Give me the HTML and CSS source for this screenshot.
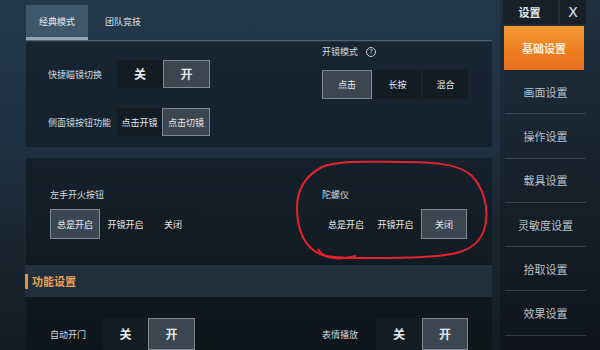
FILE: index.html
```html
<!DOCTYPE html>
<html lang="zh">
<head>
<meta charset="utf-8">
<title>设置</title>
<link rel="stylesheet" href="styles.css">
</head>
<body>
<div class="app">
  <div class="main">
    <div class="tabs">
      <div class="tab tab-on">经典模式</div>
      <div class="tab tab-off">团队竞技</div>
    </div>

    <div class="panel panel1">
      <div class="col-left">
        <div class="row row1">
          <div class="label">快捷瞄镜切换</div>
          <div class="seg">
            <div class="btn big w46">关</div>
            <div class="btn big w47 on">开</div>
          </div>
        </div>
        <div class="row row2">
          <div class="label">侧面镜按钮功能</div>
          <div class="seg">
            <div class="btn w45">点击开镜</div>
            <div class="btn w48 on">点击切镜</div>
          </div>
        </div>
      </div>
      <div class="col-right">
        <div class="label-top">开镜模式 <span class="help">?</span></div>
        <div class="seg gap2">
          <div class="btn w50 h29 on">点击</div>
          <div class="btn w47 h29">长按</div>
          <div class="btn w45 h29">混合</div>
        </div>
      </div>
    </div>

    <div class="panel panel2">
      <div class="col-left pad2">
        <div class="label-top">左手开火按钮</div>
        <div class="seg gap1">
          <div class="btn w50 h30 on">总是开启</div>
          <div class="btn w49 h30">开镜开启</div>
          <div class="btn w44 h30">关闭</div>
        </div>
      </div>
      <div class="col-right pad2">
        <div class="label-top">陀螺仪</div>
        <div class="seg gap1">
          <div class="btn w48 h30">总是开启</div>
          <div class="btn w49 h30">开镜开启</div>
          <div class="btn w46 h30 on">关闭</div>
        </div>
      </div>
    </div>

    <div class="section-head"><span class="bar"></span>功能设置</div>

    <div class="panel panel3">
      <div class="col-left pad3">
        <div class="row">
          <div class="label short">自动开门</div>
          <div class="seg">
            <div class="btn big w45 h32">关</div>
            <div class="btn big w47 h32 on">开</div>
          </div>
        </div>
      </div>
      <div class="col-right pad3">
        <div class="row">
          <div class="label short2">表情播放</div>
          <div class="seg">
            <div class="btn big w46 h32">关</div>
            <div class="btn big w46 h32 on">开</div>
          </div>
        </div>
      </div>
    </div>
  </div>

  <div class="side">
    <div class="side-head">
      <div class="title">设置</div>
      <div class="close">X</div>
    </div>
    <div class="nav nav-on">基础设置</div>
    <div class="nav">画面设置</div>
    <div class="nav">操作设置</div>
    <div class="nav">载具设置</div>
    <div class="nav">灵敏度设置</div>
    <div class="nav">拾取设置</div>
    <div class="nav">效果设置</div>
  </div>
</div>

<svg class="mark" width="600" height="350" viewBox="0 0 600 350">
  <path d="M322,167 C338,160 365,162 405,162 C440,162 460,165 472,176 C483,188 488,205 486,221 C484,237 476,247 460,252 C440,258 400,258 360,258 C345,258 328,258 320,254 C305,248 297,230 297,208 C297,190 305,176 322,167 Z" fill="none" stroke="#e3222c" stroke-width="2"/>
  <path d="M318,249 C322,258 338,261 356,256" fill="none" stroke="#e3222c" stroke-width="2"/>
</svg>
</body>
</html>
```

FILE: styles.css
```css
* { box-sizing: border-box; }

html, body {
  margin: 0;
  padding: 0;
}

body {
  width: 600px;
  height: 350px;
  overflow: hidden;
  position: relative;
  font-family: "Noto Sans CJK SC", "Noto Sans", sans-serif;
  color: #d6dce1;
  background: linear-gradient(180deg, #23394b 0%, #1e3142 40%, #18242f 75%, #141b22 100%);
}

.app {
  display: flex;
  height: 350px;
}

.main {
  flex: 0 0 500px;
  padding-left: 26px;
  padding-right: 8px;
}

.tabs {
  height: 41px;
  display: flex;
  align-items: flex-start;
  border-bottom: 1px solid rgba(130, 150, 165, 0.45);
}

.tab {
  font-size: 9px;
  line-height: 1;
  display: flex;
  align-items: center;
  justify-content: center;
}

.tab-on {
  margin-top: 5px;
  width: 62px;
  height: 35px;
  background: rgba(110, 140, 160, 0.38);
  border-bottom: 3px solid #93a7b4;
  color: #e6ebee;
}

.tab-off {
  margin-top: 5px;
  height: 32px;
  margin-left: 17px;
  color: #dfe5ea;
}

.panel {
  display: grid;
  grid-template-columns: 274px 192px;
  background: rgba(8, 14, 20, 0.42);
}

.panel1 {
  margin-top: 1px;
  height: 105px;
}

.panel2 {
  margin-top: 11px;
  height: 107px;
}

.panel3 {
  height: 60px;
}

.col-left {
  padding-left: 22px;
  padding-top: 18px;
  display: flex;
  flex-direction: column;
  gap: 20px;
}

.col-right {
  padding-left: 22px;
  padding-top: 3px;
  display: flex;
  flex-direction: column;
}

.row {
  display: flex;
  align-items: center;
}

.row2 {
  margin-top: 0;
}

.label {
  width: 69px;
  font-size: 9px;
  line-height: 1;
  color: #d2d9de;
  white-space: nowrap;
}

.label.short {
  width: 55px;
  padding-left: 2px;
}

.label.short2 {
  width: 54px;
}

.label-top {
  font-size: 9px;
  line-height: 14px;
  height: 14px;
  color: #d2d9de;
  display: flex;
  align-items: center;
  gap: 8px;
  margin-bottom: 11px;
}

.help {
  width: 10px;
  height: 10px;
  border: 1px solid #c9d1d7;
  border-radius: 50%;
  font-size: 7px;
  line-height: 8px;
  text-align: center;
  font-family: "DejaVu Sans", sans-serif;
}

.pad2 {
  padding-top: 30px;
  gap: 0;
}

.pad2 .label-top {
  margin-bottom: 7px;
}

.col-left.pad2 {
  padding-left: 24px;
}

.pad3 {
  padding-top: 21px;
}

.seg {
  display: flex;
}

.gap1 { gap: 1px; }
.gap2 { gap: 2px; }

.btn {
  height: 28px;
  background: #141c23;
  color: #e4e9ec;
  font-size: 9px;
  line-height: 1;
  display: flex;
  align-items: center;
  justify-content: center;
  white-space: nowrap;
}

.btn.big {
  font-size: 12px;
  font-weight: 700;
}

.btn.on {
  background: #3a4651;
  border: 1px solid #7c8994;
}

.w44 { width: 44px; }
.w45 { width: 45px; }
.w46 { width: 46px; }
.w47 { width: 47px; }
.w48 { width: 48px; }
.w49 { width: 49px; }
.w50 { width: 50px; }
.h29 { height: 29px; }
.h30 { height: 30px; }
.h32 { height: 32px; }

.section-head {
  height: 32px;
  display: flex;
  align-items: center;
  gap: 4px;
  margin-left: -1px;
  font-size: 11px;
  font-weight: 700;
  color: #e9a458;
  background: rgba(70, 95, 115, 0.22);
}

.bar {
  width: 3px;
  height: 15px;
  background: #e9913a;
}

.side {
  flex: 1;
  padding-left: 3px;
  padding-right: 12px;
  background: linear-gradient(180deg, rgba(20, 28, 36, 0.35), rgba(12, 16, 20, 0.55));
  display: flex;
  flex-direction: column;
}

.side-head {
  height: 26px;
  display: flex;
  gap: 2px;
  padding-bottom: 2px;
}

.title {
  width: 55px;
  background: #18212a;
  font-size: 11px;
  font-weight: 700;
  color: #e2e7eb;
  display: flex;
  align-items: center;
  justify-content: center;
  padding-right: 2px;
}

.close {
  width: 26px;
  background: #18212a;
  font-family: "DejaVu Sans", sans-serif;
  font-size: 14px;
  color: #e2e7eb;
  display: flex;
  align-items: center;
  justify-content: center;
}

.nav {
  height: 44.3px;
  flex: 0 0 auto;
  margin: 0 2px;
  font-size: 11px;
  color: #b9c1c8;
  display: flex;
  align-items: center;
  justify-content: center;
  border-bottom: 1px solid rgba(120, 135, 148, 0.35);
}

.nav-on {
  margin: 0 0 0 1px;
  width: 80px;
  height: 44px;
  background: linear-gradient(180deg, #f49a34 0%, #ee7f22 55%, #e86d1c 100%);
  color: #fff1de;
  font-weight: 700;
  border-bottom: none;
}

.mark {
  position: absolute;
  left: 0;
  top: 0;
  pointer-events: none;
}
```
